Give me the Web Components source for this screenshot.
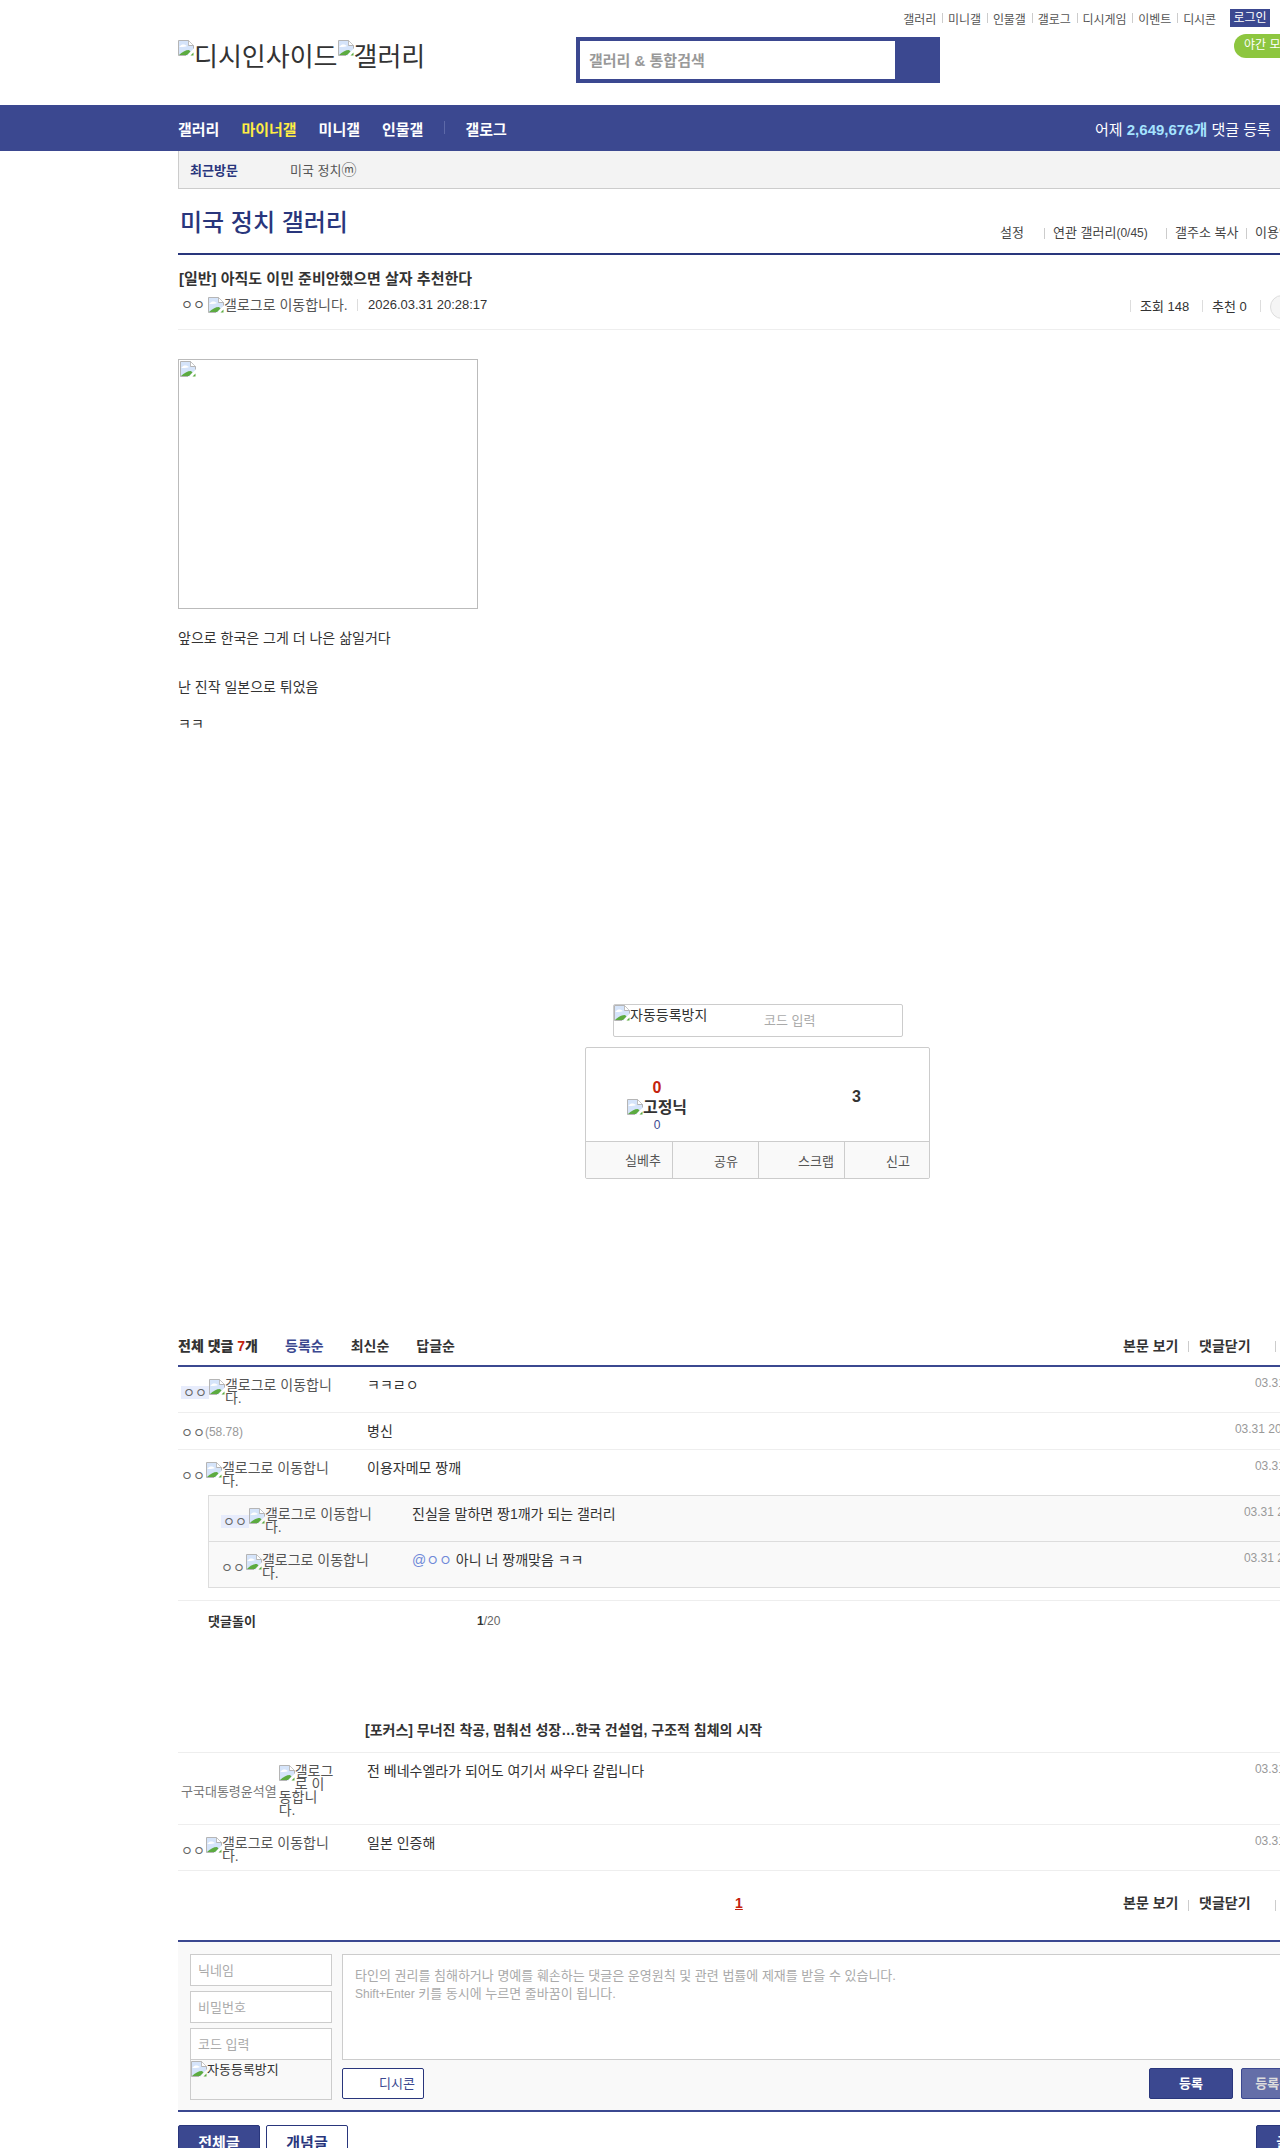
<!DOCTYPE html>
<html lang="ko">
<head>
<meta charset="utf-8">
<title>미국 정치 갤러리</title>
<style>
html, body { margin: 0; padding: 0; background: #fff; }
html { overflow: hidden; }
body {
  width: 1280px; height: 2148px; overflow: hidden;
  font-family: "Liberation Sans", "Noto Sans CJK KR", sans-serif;
  font-size: 13px; color: #333;
}
dc-cmt-bar i { font-style: normal; color: #c4220d; }
</style>
</head>
<body>
<dc-header></dc-header>
<dc-nav></dc-nav>
<dc-recent></dc-recent>
<dc-page>
  <dc-gallhead></dc-gallhead>
  <dc-posthead></dc-posthead>
  <dc-postbody></dc-postbody>
  <dc-recommend></dc-recommend>
  <dc-cmt-bar top>
    <b>전체 댓글 <i>7</i>개</b><span class="on">등록순</span><span>최신순</span><span>답글순</span>
  </dc-cmt-bar>
  <dc-comment hl date="03.31 20:31:04" end="3" lines="갤로그로 이동합니|다.">ㅋㅋㄹㅇ</dc-comment>
  <dc-comment ip="58.78" date="03.31 20:32:16" end="23">병신</dc-comment>
  <dc-comment date="03.31 20:35:42" end="3" noline lines="갤로그로 이동합니|다.">이용자메모 짱깨</dc-comment>
  <dc-replies>
    <dc-comment reply hl date="03.31 20:36:20" end="14" lines="갤로그로 이동합니|다.">진실을 말하면 짱1깨가 되는 갤러리</dc-comment>
    <dc-comment reply noline date="03.31 20:38:51" end="14" lines="갤로그로 이동합니|다."><span style="color:#6f89d8">@ㅇㅇ</span> 아니 너 짱깨맞음 ㅋㅋ</dc-comment>
  </dc-replies>
  <dc-bot></dc-bot>
  <dc-comment gray nick="구국대통령윤석열" date="03.31 20:44:09" end="3" lines="갤로그|로 이|동합니|다.">전 베네수엘라가 되어도 여기서 싸우다 갈립니다</dc-comment>
  <dc-comment date="03.31 20:47:33" end="3" lines="갤로그로 이동합니|다.">일본 인증해</dc-comment>
  <dc-cmt-bar><em>1</em></dc-cmt-bar>
  <dc-form></dc-form>
  <dc-bottom-btns></dc-bottom-btns>
</dc-page>

<script>
// 속성이 없는 단순한 요소는 마크업만 넘겨서 등록한다
function defineStatic(name, html) {
    const template = document.createElement("template");
    template.innerHTML = html;
    customElements.define(name, class extends HTMLElement {
        constructor() {
            super();
            this.attachShadow({mode: "open"});
            this.shadowRoot.append(template.content.cloneNode(true));
        }
    });
}

// 깨진 이미지 아이콘 + 대체 텍스트
class DcImg extends HTMLElement {
    constructor() {
        super();
        this.attachShadow({mode: "open"});
        this.shadowRoot.append(DcImg.template.content.cloneNode(true));
    }
}
DcImg.template = document.createElement("template");
DcImg.template.innerHTML = `
<style>
:host { display: inline; }
svg { display: block; width: 16px; height: 16px; float: left; }
</style>
<svg viewBox="0 0 16 16">
  <path d="M.5.5H10.5L15.5 5.5V9L12 12 9.5 15.5H.5z" fill="#d5e4fa"/>
  <path d="M1.5 6.5C3.5 3.5 7 4 9 6 7.5 7 3.5 7.2 1.5 7z" fill="#fff"/>
  <path d="M1 15C4 12 7.5 10 11 10L12.5 11.5 9 15z" fill="#5cab40"/>
  <path d="M.5 15.5V.5H10.5L15.5 5.5V8.5M10.5.5V5.5H15.5M.5 15.5H8" fill="none" stroke="#b5b5b5"/>
  <path d="M10.9 1.2V5.1H14.8z" fill="#fff"/>
  <path d="M12.5 15.5 15.5 12.5V15.5z" fill="#5cab40"/>
</svg><slot></slot>`;
customElements.define("dc-img", DcImg);

defineStatic("dc-header", `
<style>
:host { display: block; height: 105px; padding-left: 178px; width: 1280px; box-sizing: border-box; overflow: hidden; }
.top { display: flex; justify-content: flex-end; align-items: center; height: 18px; padding-top: 9px; width: 1092px; font-size: 12px; color: #555; letter-spacing: -.1px; white-space: nowrap; }
.top span + span { margin-left: 6px; padding-left: 6px; background: linear-gradient(#ccc,#ccc) left center / 1px 10px no-repeat; }
.login { margin-left: 14px; width: 40px; height: 18px; line-height: 18px; background: #3b4890; color: #fff; text-align: center; font-size: 12px; }
.main { display: flex; align-items: flex-start; white-space: nowrap; }
.logo { display: flex; flex: none; width: 398px; margin-top: 13px; font-size: 26px; line-height: 34px; color: #333; }
.search { display: flex; flex: none; width: 364px; height: 46px; margin-top: 10px; box-sizing: border-box; border: solid #3b4890; border-width: 4px 0 4px 4px; background: #3b4890; }
.search div { width: 315px; background: #fff; box-sizing: border-box; padding-left: 9px; font-size: 15px; font-weight: bold; color: #999; line-height: 39px; }
.night { flex: none; margin: 7px 0 0 294px; width: 60px; height: 24px; line-height: 23px; padding-left: 10px; box-sizing: border-box; border-radius: 12px 0 0 12px; background: #8dc63f; color: #fff; font-size: 12px; overflow: hidden; }
</style>
<div class="top">
  <span>갤러리</span><span>미니갤</span><span>인물갤</span><span>갤로그</span><span>디시게임</span><span>이벤트</span><span>디시콘</span>
  <div class="login">로그인</div>
</div>
<div class="main">
  <div class="logo"><dc-img>디시인사이드</dc-img><dc-img>갤러리</dc-img></div>
  <div class="search"><div>갤러리 &amp; 통합검색</div></div>
  <div class="night">야간 모드</div>
</div>`);

defineStatic("dc-nav", `
<style>
:host { display: flex; align-items: center; height: 46px; background: #3b4890; color: #fff; padding-left: 178px; box-sizing: border-box; white-space: nowrap; overflow: hidden; }
.items { display: flex; gap: 22px; font-size: 15px; font-weight: bold; width: 917px; flex: none; }
.y { color: #ffed44; }
.sep { width: 1px; height: 13px; margin: 3px -2px 0 -1px; background: #5d69a8; }
.stat { font-size: 15px; }
.stat b { color: #a5e3ff; }
</style>
<div class="items"><span>갤러리</span><span class="y">마이너갤</span><span>미니갤</span><span>인물갤</span><span class="sep"></span><span>갤로그</span></div>
<div class="stat">어제 <b>2,649,676개</b> 댓글 등록</div>`);

defineStatic("dc-recent", `
<style>
:host { display: flex; align-items: center; margin-left: 178px; width: 1102px; height: 38px; box-sizing: border-box; background: #f3f3f3; border-left: 1px solid #ccc; border-bottom: 1px solid #ccc; font-size: 13px; padding-left: 11px; }
b { color: #29367c; width: 100px; }
span { color: #555; }
i { font-style: normal; font-size: 15px; line-height: 13px; }
</style>
<b>최근방문</b><span>미국 정치<i>ⓜ</i></span>`);

defineStatic("dc-page", `
<style>
:host { display: block; margin-left: 178px; width: 1160px; }
</style>
<slot></slot>`);

defineStatic("dc-gallhead", `
<style>
:host { display: flex; height: 64px; align-items: flex-start; border-bottom: 2px solid #29367c; white-space: nowrap; }
h1 { flex: none; width: 822px; margin: 16px 0 0; padding-left: 2px; box-sizing: border-box; font-size: 24px; line-height: 36px; font-weight: 500; color: #29367c; }
.links { display: flex; flex: none; margin-top: 36px; font-size: 13px; line-height: 15px; color: #444; }
.links i { font-style: normal; font-size: 12px; }
.links span { flex: none; }
.links span + span { background: linear-gradient(#ccc,#ccc) left center / 1px 11px no-repeat; padding-left: 9px; }
</style>
<h1>미국 정치 갤러리</h1>
<div class="links"><span style="width:44px">설정</span><span style="width:113px">연관 갤러리<i>(0/45)</i></span><span style="width:71px">갤주소 복사</span><span>이용안내</span></div>`);

defineStatic("dc-posthead", `
<style>
:host { display: block; height: 74px; border-bottom: 1px solid #eee; white-space: nowrap; }
h2 { margin: 0; padding: 15px 0 0 1px; font-size: 15px; line-height: 18px; font-weight: bold; color: #333; }
.meta { display: flex; margin-top: 9px; font-size: 13px; line-height: 16px; }
.nick { padding-left: 3px; width: 30px; flex: none; box-sizing: border-box; color: #555; }
dc-img { display: block; flex: none; width: 149px; color: #555; font-size: 14px; }
.date { border-left: 1px solid #ddd; padding-left: 10px; width: 762px; flex: none; height: 12px; line-height: 12px; margin-top: 2px; box-sizing: content-box; }
.r { display: flex; flex: none; margin-top: 2px; line-height: 14px; }
.r span { flex: none; border-left: 1px solid #ddd; height: 12px; line-height: 13px; padding-left: 9px; margin-top: 1px; }
.round { width: 22px; height: 22px; margin: -4px 0 0 0; border-radius: 50%; border: 1px solid #ddd; background: #f5f5f5; flex: none; }
</style>
<h2>[일반] 아직도 이민 준비안했으면 살자 추천한다</h2>
<div class="meta">
  <div class="nick">ㅇㅇ</div><dc-img>갤로그로 이동합니다.</dc-img>
  <div class="date">2026.03.31 20:28:17</div>
  <div class="r"><span style="width:62px">조회 148</span><span style="width:48px">추천 0</span><span></span><div class="round"></div></div>
</div>`);

defineStatic("dc-postbody", `
<style>
:host { display: block; padding-top: 29px; font-size: 14px; line-height: 20px; color: #333; }
.pic { width: 300px; height: 250px; box-sizing: border-box; border: 1px solid #bbb; padding: 1px; }
p { margin: 0; }
</style>
<div class="pic"><dc-img></dc-img></div>
<p style="margin-top:19px">앞으로 한국은 그게 더 나은 삶일거다</p>
<p style="margin-top:29px">난 진작 일본으로 튀었음</p>
<p style="margin-top:17px">ㅋㅋ</p>`);

defineStatic("dc-recommend", `
<style>
:host { display: block; padding-top: 270px; }
.code { display: flex; width: 290px; height: 33px; margin-left: 435px; box-sizing: border-box; border: 1px solid #ccc; border-radius: 2px; }
.code dc-img { display: block; width: 150px; font-size: 14px; line-height: 20px; color: #333; }
.code span { margin-top: 8px; font-size: 13px; line-height: 16px; color: #aaa; }
.box { width: 345px; height: 132px; margin: 10px 0 0 407px; box-sizing: border-box; border: 1px solid #ccc; border-radius: 2px; overflow: hidden; }
.nums { display: flex; height: 93px; font-weight: bold; font-size: 16px; }
.down { flex: none; width: 142px; text-align: center; padding-top: 30px; line-height: 20px; box-sizing: border-box; }
.down i { display: block; font-style: normal; color: #c4220d; line-height: 19px; }
.down dc-img { display: inline-block; line-height: 17px; color: #333; margin-top: 2px; }
.down small { display: block; font-weight: normal; font-size: 12px; line-height: 14px; color: #3b4890; }
.up { flex: none; padding: 39px 0 0 124px; line-height: 20px; box-sizing: border-box; color: #333; }
.btns { display: grid; grid-template-columns: repeat(4, 86px); height: 37px; box-sizing: border-box; border-top: 1px solid #ccc; background: #f9f9f9; font-size: 13px; color: #555; }
.btns span { text-align: right; line-height: 37px; padding-right: 11px; box-sizing: border-box; }
.btns span + span { border-left: 1px solid #ccc; line-height: 39px; }
</style>
<div class="code"><dc-img>자동등록방지</dc-img><span>코드 입력</span></div>
<div class="box">
  <div class="nums">
    <div class="down"><i>0</i><dc-img>고정닉</dc-img><small>0</small></div>
    <div class="up">3</div>
  </div>
  <div class="btns"><span>실베추</span><span style="padding-right:20px">공유</span><span style="padding-right:10px">스크랩</span><span style="padding-right:20px">신고</span></div>
</div>`);

// 댓글 목록 위, 아래에 같이 쓰는 막대. top 속성이 있으면 위쪽 모양
class DcCmtBar extends HTMLElement {
    constructor() {
        super();
        this.attachShadow({mode: "open"});
        this.shadowRoot.append(DcCmtBar.template.content.cloneNode(true));
    }
}
DcCmtBar.template = document.createElement("template");
DcCmtBar.template.innerHTML = `
<style>
:host { display: flex; font-size: 14px; line-height: 14px; font-weight: bold; white-space: nowrap; color: #333; padding: 25px 4px 26px 0; box-sizing: border-box; height: 69px; }
:host([top]) { margin-top: 151px; padding: 9px 4px 12px 0; height: 37px; border-bottom: 2px solid #3b4890; }
.left { display: flex; width: 945px; flex: none; }
:host(:not([top])) .left { padding-left: 557px; box-sizing: border-box; }
.right { display: flex; flex: none; }
.right span { flex: none; }
.right span + span { background: linear-gradient(#ccc,#ccc) left center / 1px 11px no-repeat; padding-left: 11px; }
::slotted(b) { margin-right: 27px; }
::slotted(span) { margin-right: 27px; color: #333; }
::slotted(span.on) { color: #3b4890; }
::slotted(em) { font-style: normal; font-size: 14px; color: #c4220d; text-decoration: underline; }
</style>
<div class="left"><slot></slot></div>
<div class="right"><span style="width:65px">본문 보기</span><span style="width:76px">댓글닫기</span><span>새로고침</span></div>`;
customElements.define("dc-cmt-bar", DcCmtBar);

// 댓글 한 줄. lines 는 갤로그 문구의 줄바꿈 위치를 | 로 표시한다
class DcComment extends HTMLElement {
    constructor() {
        super();
        this.attachShadow({mode: "open"});
        this.shadowRoot.append(DcComment.template.content.cloneNode(true));
        const root = this.shadowRoot;
        root.querySelector(".name").textContent = this.getAttribute("nick") || "ㅇㅇ";
        root.querySelector(".date").textContent = this.getAttribute("date");
        root.querySelector(".date").style.paddingRight = this.getAttribute("end") + "px";
        const gallog = root.querySelector("dc-img");
        const ip = this.getAttribute("ip");
        if (ip) {
            root.querySelector(".ip").textContent = "(" + ip + ")";
            gallog.remove();
        } else {
            (this.getAttribute("lines") || "").split("|").forEach((line, i) => {
                if (i) gallog.append(document.createElement("br"));
                gallog.append(line);
            });
        }
    }
}
DcComment.template = document.createElement("template");
DcComment.template.innerHTML = `
<style>
:host { display: flex; align-items: flex-start; border-bottom: 1px solid #eee; white-space: nowrap; }
:host([noline]) { border-bottom: 0; }
:host([reply]) { border-bottom: 1px solid #ddd; }
:host([reply][noline]) { border-bottom: 0; }
.who { display: flex; align-items: center; width: 189px; flex: none; box-sizing: border-box; padding: 12px 0 7px 3px; font-size: 13px; color: #666; }
:host([reply]) .who { width: 203px; padding-left: 12px; }
:host([ip]) .who { padding: 12px 0 10px 3px; line-height: 14px; }
.name { line-height: 13px; }
:host([hl]) .name { background: #e7ecfc; padding: 0 2px; }
:host([gray]) .name { color: #777; margin-right: 1px; }
.ip { color: #999; font-size: 12px; }
dc-img { display: block; font-size: 14px; line-height: 13px; color: #555; }
:host(:not([hl])) dc-img { margin-left: 1px; }
.text { flex: 1; padding-top: 10px; font-size: 14px; line-height: 17px; color: #333; }
.date { padding-top: 9px; font-size: 12px; line-height: 14px; color: #999; flex: none; }
</style>
<div class="who"><span class="name"></span><span class="ip"></span><dc-img></dc-img></div>
<div class="text"><slot></slot></div>
<div class="date"></div>`;
customElements.define("dc-comment", DcComment);

defineStatic("dc-replies", `
<style>
:host { display: block; margin-left: 30px; border: 1px solid #ddd; border-right: 0; background: #f9f9f9; }
</style>
<slot></slot>`);

defineStatic("dc-bot", `
<style>
:host { display: block; margin-top: 12px; border-top: 1px solid #eee; height: 153px; box-sizing: border-box; border-bottom: 1px solid #eee; white-space: nowrap; }
.row { display: flex; padding: 14px 0 0 30px; font-size: 13px; line-height: 14px; }
b { width: 269px; flex: none; color: #333; }
span { font-size: 12px; line-height: 12px; color: #666; }
span b { color: #333; }
h3 { margin: 92px 0 0; padding-left: 187px; font-size: 14px; line-height: 18px; font-weight: bold; color: #333; }
</style>
<div class="row"><b>댓글돌이</b><span><b style="width:auto">1</b>/20</span></div>
<h3>[포커스] 무너진 착공, 멈춰선 성장…한국 건설업, 구조적 침체의 시작</h3>`);

defineStatic("dc-form", `
<style>
:host { display: grid; grid-template-columns: 142px 984px; column-gap: 10px; padding: 12px 0 11px 12px; background: #f9f9f9; border-top: 2px solid #3b4890; border-bottom: 2px solid #3b4890; box-sizing: border-box; height: 172px; font-size: 13px; }
.left { display: flex; flex-direction: column; gap: 5px; }
.in { height: 32px; box-sizing: border-box; border: 1px solid #ccc; background: #fff; padding-left: 7px; line-height: 31px; color: #aaa; }
.cap { height: 40px; box-sizing: border-box; margin-top: -5px; border: 1px solid #ccc; border-top: 0; }
.cap dc-img { display: block; padding-top: 1px; font-size: 13px; line-height: 18px; color: #333; }
.area { height: 106px; box-sizing: border-box; border: 1px solid #ccc; background: #fff; padding: 12px 12px; line-height: 18px; color: #aaa; white-space: nowrap; }
.area i { font-style: normal; font-size: 12px; }
.act { display: flex; gap: 8px; margin-top: 8px; padding-right: 1px; font-weight: bold; }
.act div { width: 84px; height: 31px; line-height: 29px; box-sizing: border-box; border-radius: 2px; text-align: center; flex: none; white-space: nowrap; overflow: hidden; }
.dccon { width: 82px !important; margin-right: auto; border: 1px solid #29367c; background: #fff; color: #3b4890; text-align: right !important; padding-right: 8px; font-weight: normal; }
.go { background: #3b4890; border: 1px solid #29367c; color: #fff; }
.go2 { background: #646ea8; border: 1px solid #3b4890; color: #ddd; }
</style>
<div class="left">
  <div class="in">닉네임</div>
  <div class="in">비밀번호</div>
  <div class="in">코드 입력</div>
  <div class="cap"><dc-img>자동등록방지</dc-img></div>
</div>
<div>
  <div class="area">타인의 권리를 침해하거나 명예를 훼손하는 댓글은 운영원칙 및 관련 법률에 제재를 받을 수 있습니다.<br><i>Shift+Enter</i> 키를 동시에 누르면 줄바꿈이 됩니다.</div>
  <div class="act"><div class="dccon">디시콘</div><div class="go">등록</div><div class="go2">등록+추천</div></div>
</div>`);

defineStatic("dc-bottom-btns", `
<style>
:host { display: flex; gap: 6px; margin-top: 13px; font-size: 15px; font-weight: bold; white-space: nowrap; }
div { width: 82px; height: 36px; line-height: 34px; box-sizing: border-box; text-align: center; border: 1px solid #29367c; border-radius: 2px; }
.blue { background: #3b4890; color: #fff; }
.white { background: #fff; color: #29367c; }
.last { margin-left: auto; }
</style>
<div class="blue">전체글</div><div class="white">개념글</div><div class="blue last">글쓰기</div>`);
</script>
</body>
</html>
